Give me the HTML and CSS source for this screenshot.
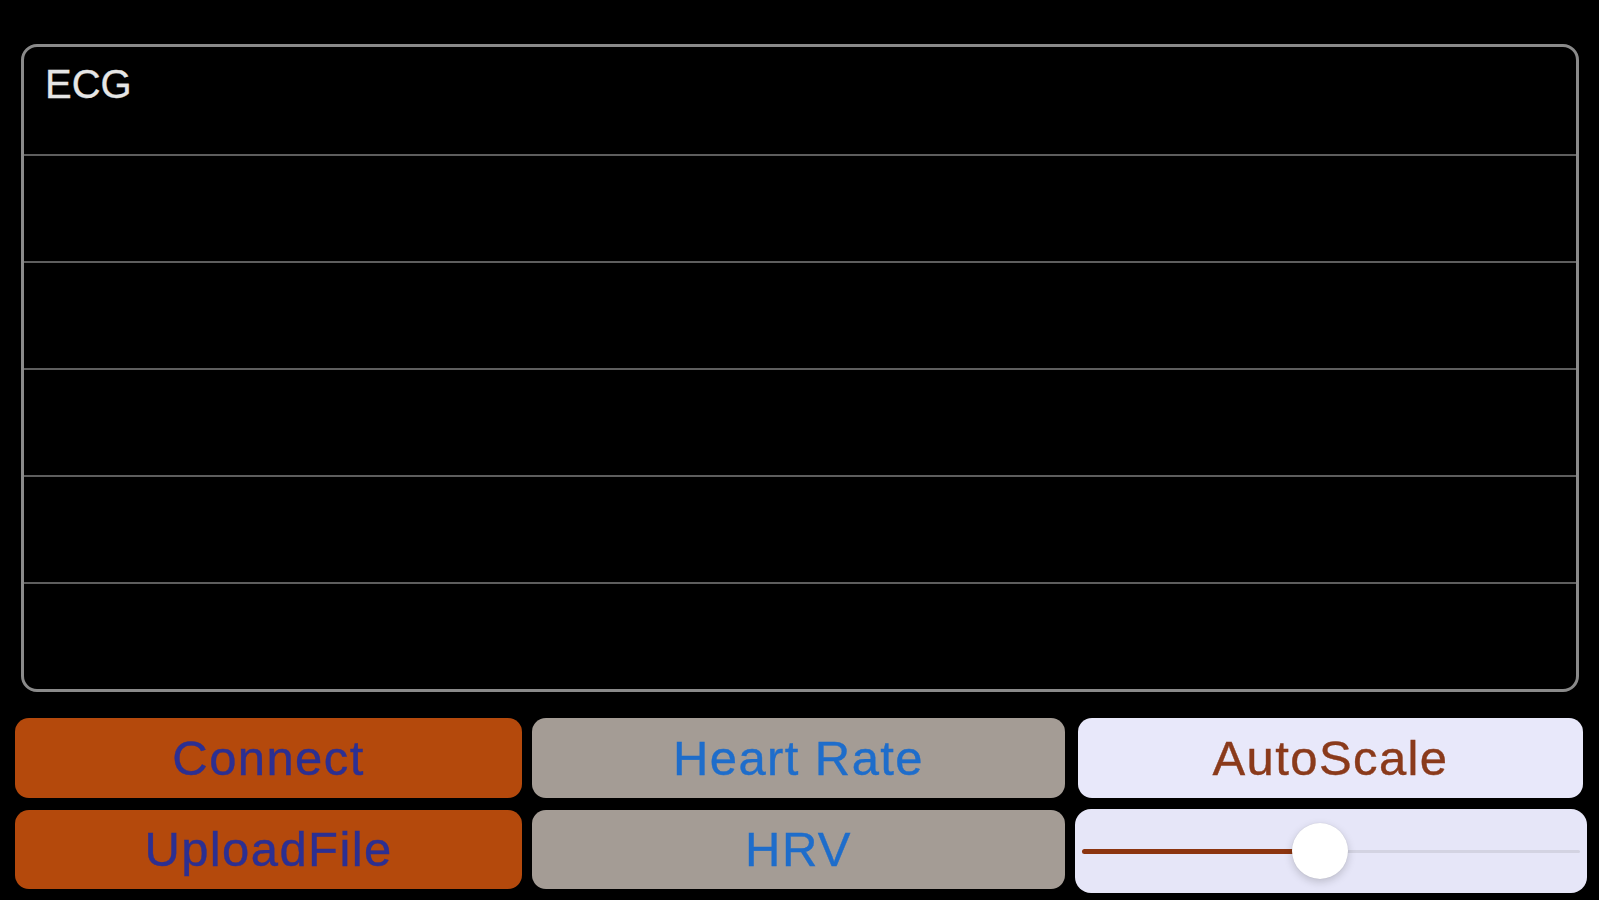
FILE: index.html
```html
<!DOCTYPE html>
<html lang="en">
<head>
<meta charset="utf-8">
<title>ECG</title>
<link rel="stylesheet" href="styles.css">
</head>
<body>
<div class="app">
  <div class="chart">
    <div class="row"><span class="label">ECG</span></div>
    <div class="row"></div>
    <div class="row"></div>
    <div class="row"></div>
    <div class="row"></div>
    <div class="row"></div>
  </div>
  <div class="controls">
    <button class="btn btn-orange">Connect</button>
    <button class="btn btn-gray btn-wide">Heart Rate</button>
    <button class="btn btn-light">AutoScale</button>
    <button class="btn btn-orange btn-second">UploadFile</button>
    <button class="btn btn-gray btn-second">HRV</button>
    <div class="slider">
      <div class="track">
        <div class="fill" style="width: 47.8%"></div>
        <div class="thumb" style="left: 47.8%"></div>
      </div>
    </div>
  </div>
</div>
</body>
</html>
```

FILE: styles.css
```css
html, body {
  margin: 0;
  padding: 0;
  background: #000;
  height: 900px;
  overflow: hidden;
}

.app {
  padding-top: 44px;
  font-family: "Liberation Sans", Arial, sans-serif;
}

.chart {
  box-sizing: border-box;
  margin-left: 21px;
  width: 1558px;
  height: 648px;
  border: 3px solid #8a8a8a;
  border-radius: 16px;
  display: grid;
  grid-template-rows: repeat(6, 1fr);
}

.row + .row {
  border-top: 2px solid #5e5e5e;
}

.label {
  display: inline-block;
  padding: 15px 0 0 21px;
  font-size: 40px;
  color: #e6e6e6;
  -webkit-text-stroke: 0.3px #e6e6e6;
}

.controls {
  margin-top: 26px;
  padding-left: 15px;
  display: grid;
  grid-template-columns: 507px 533px 512px;
  grid-template-rows: 80px 84px;
  column-gap: 10px;
  row-gap: 11px;
}

.btn {
  border: none;
  margin: 0;
  padding: 0;
  border-radius: 14px;
  font-family: "Liberation Sans", Arial, sans-serif;
  font-size: 49px;
  letter-spacing: 1.4px;
  line-height: 1;
  cursor: pointer;
  -webkit-text-stroke: 0.4px currentColor;
}

.btn-orange {
  background: #b4490c;
  color: #2c2f92;
}

.btn-gray {
  background: #a49c95;
  color: #1e6dcb;
}

.btn-light {
  background: #e8e8fa;
  color: #8a3a1b;
  margin: 0 4px 0 3px;
}

.btn-second {
  margin-top: 1px;
  height: 79px;
}

.slider {
  background: #e6e6f8;
  border-radius: 16px;
  display: flex;
  align-items: center;
  padding: 0 7px;
}

.track {
  position: relative;
  flex: 1;
  height: 3px;
  background: #d3d3e2;
  border-radius: 2px;
}

.fill {
  height: 5px;
  margin-top: -1px;
  background: #8c3510;
  border-radius: 3px;
}

.thumb {
  position: absolute;
  top: 50%;
  width: 56px;
  height: 56px;
  border-radius: 50%;
  background: #ffffff;
  transform: translate(-50%, -50%);
  box-shadow: 0 3px 8px rgba(0, 0, 0, 0.18), 0 0 1px rgba(0, 0, 0, 0.15);
}
```
